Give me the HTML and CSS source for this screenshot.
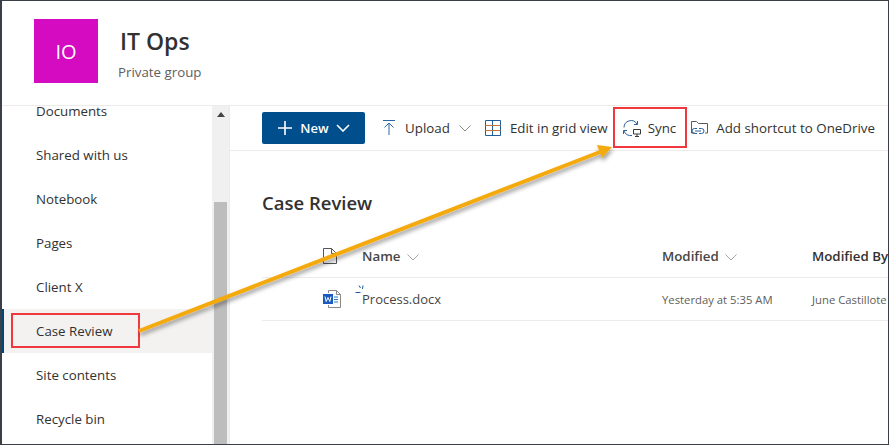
FILE: index.html
```html
<!DOCTYPE html>
<html lang="en">
<head>
<meta charset="utf-8">
<title>IT Ops</title>
<link rel="stylesheet" href="styles.css">
</head>
<body>
<div class="frame">
  <header class="site-header">
    <div class="logo">IO</div>
    <div class="site-info">
      <div class="site-title">IT Ops</div>
      <div class="site-sub">Private group</div>
    </div>
  </header>
  <div class="main">
    <aside class="side">
      <nav class="nav">
        <div class="nav-item">Documents</div>
        <div class="nav-item">Shared with us</div>
        <div class="nav-item">Notebook</div>
        <div class="nav-item">Pages</div>
        <div class="nav-item">Client X</div>
        <div class="nav-item active">Case Review</div>
        <div class="nav-item">Site contents</div>
        <div class="nav-item">Recycle bin</div>
      </nav>
      <div class="scrollbar">
        <div class="scroll-up"><svg width="8" height="5" viewBox="0 0 8 5"><path d="M0 5 4 0l4 5z" fill="#444"/></svg></div>
        <div class="scroll-thumb"></div>
      </div>
    </aside>
    <section class="content">
      <div class="toolbar">
        <button class="new-btn">
          <svg width="16" height="16" viewBox="0 0 16 16"><path d="M8 1v14M1 8h14" stroke="#fff" stroke-width="1.6" fill="none"/></svg>
          <span>New</span>
          <svg width="14" height="8" viewBox="0 0 14 8"><path d="M1 1l6 6 6-6" stroke="#fff" stroke-width="1.6" fill="none"/></svg>
        </button>
        <div class="cmd cmd-upload">
          <svg class="ic" width="14" height="16" viewBox="0 0 14 16"><path d="M1 .5h12M7 15V3M2.500 7.500 7 3l4.500 4.500" stroke="#2b66a5" fill="none"/></svg>
          <span>Upload</span>
          <svg width="12" height="7" viewBox="0 0 12 7"><path d="M.5.500 6 6 11.500.500" stroke="#8a8886" fill="none"/></svg>
        </div>
        <div class="cmd cmd-grid">
          <svg class="ic" width="16" height="16" viewBox="0 0 16 16"><path d="M.5.500h15v15H.500zM7.500.500v15" stroke="#1f5f9f" fill="none"/><path d="M.5 5.500h15M.5 10.500h15" stroke="#c8733a" fill="none"/></svg>
          <span>Edit in grid view</span>
        </div>
        <div class="cmd cmd-sync">
          <svg class="ic" width="18" height="17" viewBox="0 0 18 17"><path d="M1 7.500A7 7 0 0 1 14 4M11 4.500h3.500V1M.5 10.500h3.500M.5 10.500V14M1 11A7 7 0 0 0 9 15.500" stroke="#2b5f98" fill="none"/><path d="M10.500 9.500h7v4.500h-7zM14 14v2M12 16.500h4" stroke="#3a3a3a" fill="none"/></svg>
          <span>Sync</span>
        </div>
        <div class="cmd cmd-short">
          <svg class="ic" width="17" height="16" viewBox="0 0 17 16"><path d="M4 13H.5V1.500h5l2 2h9V13H14" stroke="#5a5a5a" fill="none"/><path d="M6 8.500H3.500a2.500 2.500 0 0 0 0 5H6M8 8.500h2.500a2.500 2.500 0 0 1 0 5H8M4 11h6" stroke="#2b5f98" fill="none"/></svg>
          <span>Add shortcut to OneDrive</span>
        </div>
      </div>
      <div class="lib">
        <h1 class="lib-title">Case Review</h1>
        <div class="row head">
          <div class="c-icon"><svg width="14" height="16" viewBox="0 0 14 16"><path d="M.5.500h8l5 5v10H.500zM8.500.500v5h5" stroke="#555" fill="none"/></svg></div>
          <div class="c-name">Name <svg class="sort" width="12" height="7" viewBox="0 0 12 7"><path d="M.5.500 6 6 11.500.500" stroke="#a6a6a6" fill="none"/></svg></div>
          <div class="c-mod">Modified <svg class="sort" width="12" height="7" viewBox="0 0 12 7"><path d="M.5.500 6 6 11.500.500" stroke="#a6a6a6" fill="none"/></svg></div>
          <div class="c-by">Modified By</div>
        </div>
        <div class="row item">
          <div class="c-icon">
            <svg width="18" height="18" viewBox="0 0 18 18"><path d="M5.500 3V.5h8l4 4v13h-12V15" stroke="#8a8886" fill="#fff"/><path d="M13.500.5v4h4" stroke="#8a8886" fill="none"/><path d="M11 7h4M11 9.500h4M11 12h4" stroke="#2b7cd3"/><rect y="4" width="10" height="10" fill="#185abd"/><path d="M2 6.500l1.200 5L5 7.500l1.800 4L8 6.500" stroke="#fff" stroke-width="1" fill="none"/></svg>
          </div>
          <div class="c-name file">
            <svg class="spark" width="9" height="9" viewBox="0 0 9 9"><path d="M.5 7.500h5M4 .5 5.500 3M8 .5 7.500 4" stroke="#1b5c9e" fill="none"/></svg>
            Process.docx
          </div>
          <div class="c-mod small">Yesterday at 5:35 AM</div>
          <div class="c-by small">June Castillote</div>
        </div>
      </div>
    </section>
  </div>
  <div class="mark mark-case"></div>
  <div class="mark mark-sync"></div>
  <svg class="arrow" width="889" height="445" viewBox="0 0 889 445">
    <defs>
      <filter id="sh" x="-5%" y="-5%" width="110%" height="115%"><feDropShadow dx="1" dy="3" stdDeviation="2" flood-color="#000" flood-opacity=".4"/></filter>
    </defs>
    <g filter="url(#sh)">
      <path d="M139 331 600 152" stroke="#f4a90c" stroke-width="4" fill="none"/>
      <path d="M612 147 597 145 602 158z" fill="#f4a90c"/>
    </g>
  </svg>
</div>
</body>
</html>
```
FILE: styles.css
```css
* { box-sizing: border-box; }
html, body { margin: 0; height: 100%; }
body { font-family: "Open Sans", "Noto Sans", sans-serif; color: #323130; background: #fff; overflow: hidden; }
.frame {
  position: relative;
  width: 889px;
  height: 445px;
  display: flex;
  flex-direction: column;
  border-top: 1px solid #3a4046;
  border-left: 2px solid #3a4046;
  border-right: 1px solid #3a4046;
  border-bottom: 1px solid #3a4046;
  overflow: hidden;
}
.site-header {
  height: 105px;
  flex: none;
  display: flex;
  align-items: flex-start;
  padding: 18px 0 0 32px;
  border-bottom: 1px solid #edebe9;
}
.logo {
  width: 64px;
  height: 64px;
  background: #d40bc0;
  color: #fff;
  font-size: 20px;
  display: flex;
  align-items: center;
  justify-content: center;
}
.site-info { margin-left: 20px; }
.site-title { font-size: 23px; font-weight: 600; line-height: 30px; margin-top: 7px; margin-left: 2px; }
.site-sub { font-size: 13.300px; line-height: 18px; color: #605e5c; margin-top: 7px; }
.main { flex: 1; display: flex; min-height: 0; }
.side {
  width: 228px;
  flex: none;
  display: flex;
  border-right: 1px solid #edebe9;
  overflow: hidden;
}
.nav { width: 210px; flex: none; margin-top: -17px; }
.nav-item {
  height: 44px;
  display: flex;
  align-items: center;
  padding-left: 34px;
  font-size: 13.300px;
}
.nav-item.active { background: #f3f2f1; box-shadow: inset 2px 0 0 #004578; }
.scrollbar { width: 17px; flex: none; background: #f0f0f0; display: flex; flex-direction: column; }
.scroll-up { height: 17px; display: flex; align-items: center; justify-content: center; }
.scroll-thumb { width: 13px; height: 243px; margin: 79px 0 0 2px; background: #bdbdbd; }
.content { flex: 1; min-width: 0; padding-left: 32px; overflow: hidden; }
.toolbar {
  height: 45px;
  margin-left: -32px;
  padding-left: 32px;
  display: flex;
  align-items: center;
  border-bottom: 1px solid #edebe9;
  white-space: nowrap;
  font-size: 13.350px;
}
.new-btn {
  width: 103px;
  height: 32px;
  flex: none;
  border: 0;
  border-radius: 2px;
  background: #004e8c;
  color: #fff;
  font: 600 13px "Open Sans", sans-serif;
  display: flex;
  align-items: center;
  justify-content: center;
  gap: 7px;
  padding: 0;
}
.cmd { display: flex; align-items: center; flex: none; }
.ic { flex: none; }
.cmd-upload { margin-left: 17px; gap: 9px; }
.cmd-grid { margin-left: 14px; gap: 9px; }
.cmd-sync { margin-left: 15px; gap: 7px; }
.cmd-short { margin-left: 15px; gap: 8px; }
.lib { padding-top: 40px; }
.lib-title { margin: 0; font-size: 18.500px; font-weight: 600; line-height: 24px; }
.row { display: flex; align-items: center; border-bottom: 1px solid #edebe9; white-space: nowrap; }
.head { height: 43px; margin-top: 20px; font-size: 13.300px; font-weight: 600; }
.head .c-name, .head .c-mod { color: #484644; }
.item { height: 43px; font-size: 13px; }
.c-icon { width: 100px; padding-left: 61px; flex: none; display: flex; }
.c-name { width: 300px; flex: none; position: relative; }
.c-mod { width: 150px; flex: none; }
.c-by { flex: none; }
.file { color: #484644; }
.small { font-size: 11.300px; color: #605e5c; }
.sort { margin-left: 3px; }
.spark { position: absolute; left: -7px; top: -5px; }
.mark { position: absolute; border: 2px solid #f0393f; }
.mark-case { left: 9px; top: 312px; width: 129px; height: 35px; }
.mark-sync { left: 611px; top: 106px; width: 74px; height: 41px; }
.arrow { position: absolute; left: -2px; top: -1px; pointer-events: none; }
```
